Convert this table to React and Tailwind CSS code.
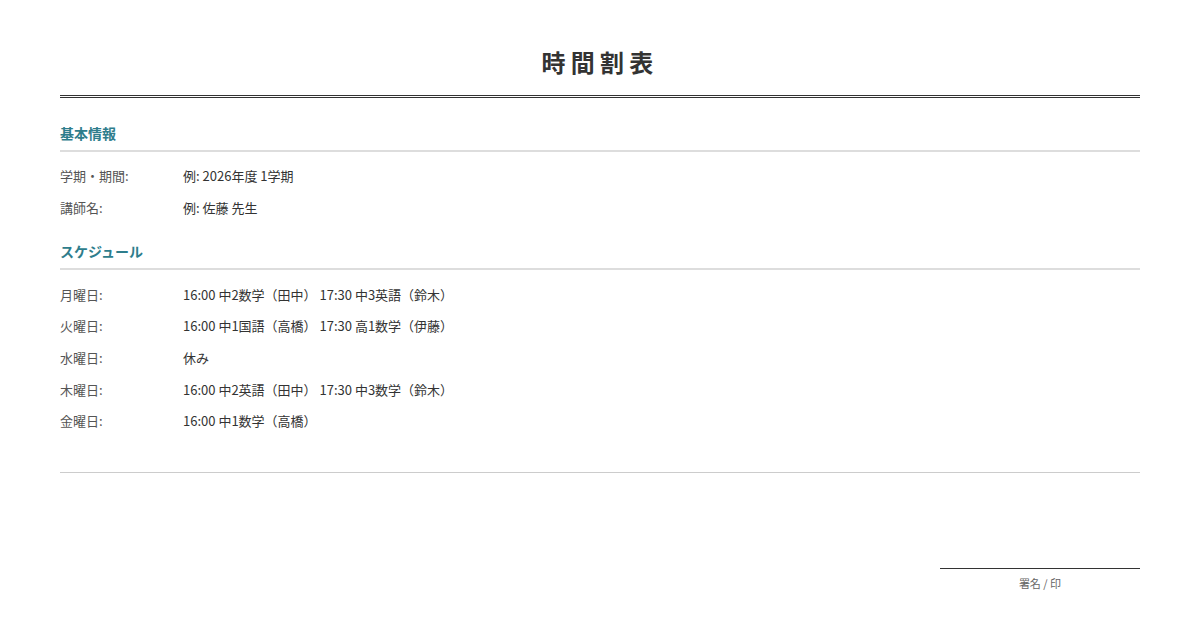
export default function App() {
  const font = { fontFamily: '"Noto Sans CJK JP", "Noto Sans", sans-serif' };
  const basic = [
    ["学期・期間:", "例: 2026年度 1学期"],
    ["講師名:", "例: 佐藤 先生"],
  ];
  const schedule = [
    ["月曜日:", "16:00 中2数学（田中） 17:30 中3英語（鈴木）"],
    ["火曜日:", "16:00 中1国語（高橋） 17:30 高1数学（伊藤）"],
    ["水曜日:", "休み"],
    ["木曜日:", "16:00 中2英語（田中） 17:30 中3数学（鈴木）"],
    ["金曜日:", "16:00 中1数学（高橋）"],
  ];
  const Row = ({ label, value }) => (
    <div className="flex h-[31.6px] items-center text-[13px] leading-[20px]">
      <div className="w-[123px] shrink-0 text-[#555]">{label}</div>
      <div className="text-[#333]">{value}</div>
    </div>
  );
  return (
    <div className="w-[1200px] h-[630px] bg-white px-[60px] pt-[44px]" style={font}>
      <h1 className="text-center text-[24px] leading-[36px] font-bold tracking-[0.22em] text-[#333] pb-[15px] border-b-[3px] border-double border-[#333]">
        時間割表
      </h1>
      <h2 className="mt-[25px] text-[14px] leading-[21px] font-bold text-[#2e7d8c] pb-[6px] border-b-2 border-[#ddd]">
        基本情報
      </h2>
      <div className="mt-[8.7px]">
        {basic.map(([l, v]) => (
          <Row key={l} label={l} value={v} />
        ))}
      </div>
      <h2 className="mt-[17.5px] text-[14px] leading-[21px] font-bold text-[#2e7d8c] pb-[6px] border-b-2 border-[#ddd]">
        スケジュール
      </h2>
      <div className="mt-[8.7px]">
        {schedule.map(([l, v]) => (
          <Row key={l} label={l} value={v} />
        ))}
      </div>
      <div className="mt-[35px] border-t border-[#ccc]" />
      <div className="flex justify-end mt-[95px]">
        <div className="w-[200px] border-t border-[#333] pt-[6px] text-center text-[11px] leading-[16px] text-[#666]">
          署名 / 印
        </div>
      </div>
    </div>
  );
}
